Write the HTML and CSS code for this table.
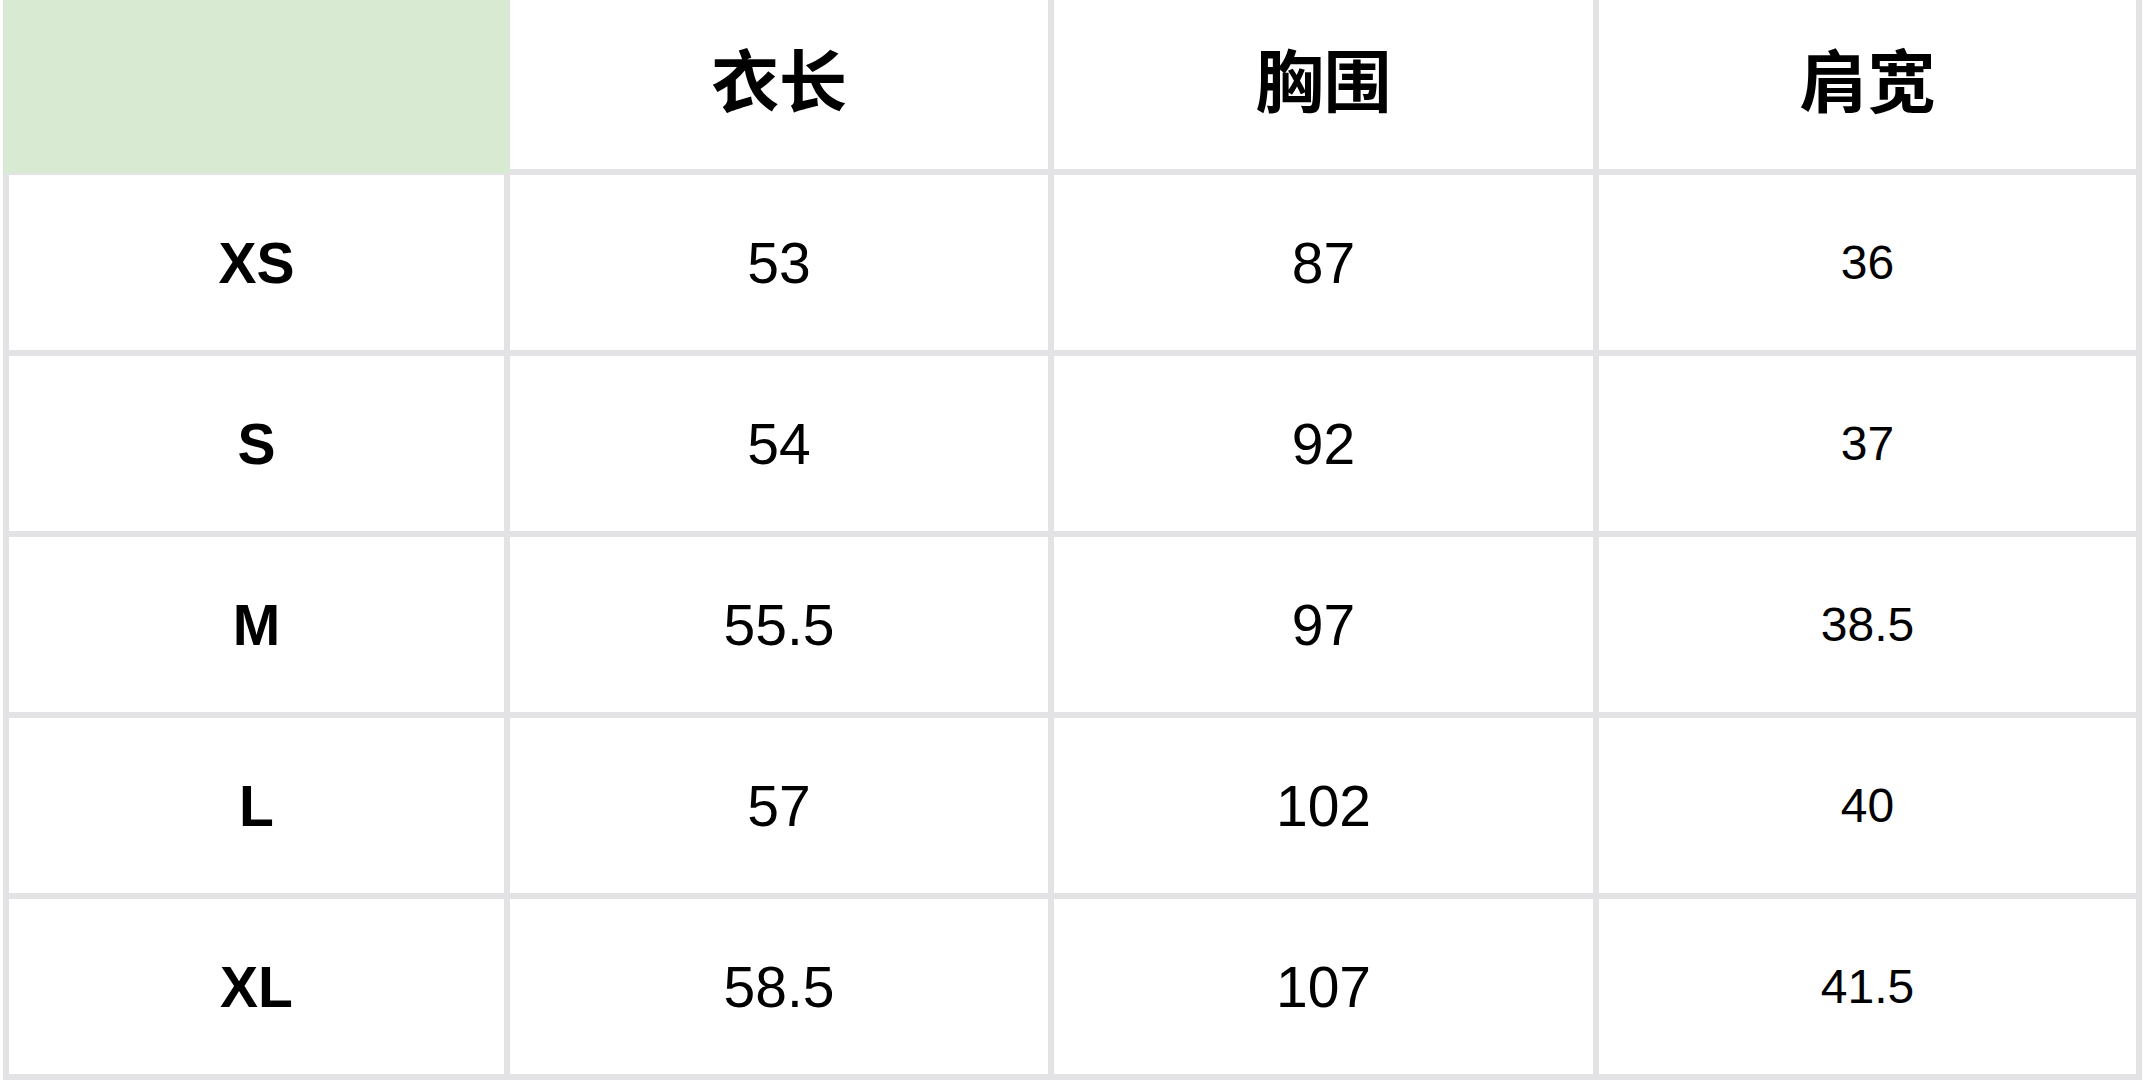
FILE: index.html
```html
<!DOCTYPE html>
<html lang="zh-CN">
<head>
<meta charset="utf-8">
<title>尺码表</title>
<link rel="stylesheet" href="styles.css">
</head>
<body>
<div class="sheet">
  <div class="cell head corner"></div>
  <div class="cell head">衣长</div>
  <div class="cell head">胸围</div>
  <div class="cell head">肩宽</div>

  <div class="cell size">XS</div>
  <div class="cell num">53</div>
  <div class="cell num">87</div>
  <div class="cell num small">36</div>

  <div class="cell size">S</div>
  <div class="cell num">54</div>
  <div class="cell num">92</div>
  <div class="cell num small">37</div>

  <div class="cell size">M</div>
  <div class="cell num">55.5</div>
  <div class="cell num">97</div>
  <div class="cell num small">38.5</div>

  <div class="cell size">L</div>
  <div class="cell num">57</div>
  <div class="cell num">102</div>
  <div class="cell num small">40</div>

  <div class="cell size">XL</div>
  <div class="cell num">58.5</div>
  <div class="cell num">107</div>
  <div class="cell num small">41.5</div>
</div>
</body>
</html>
```

FILE: styles.css
```css
html, body {
  margin: 0;
  padding: 0;
  background: #ffffff;
}

body {
  width: 2148px;
  height: 1080px;
  overflow: hidden;
  font-family: "Liberation Sans", Arial, sans-serif;
  color: #000000;
}

.sheet {
  display: grid;
  grid-template-columns: 495px 538px 539px 537px;
  grid-template-rows: 169px 175px 175px 175px 175px 175px;
  gap: 6px;
  margin-left: 3px;
  width: 2139px;
  box-sizing: border-box;
  padding: 0 6px 6px 6px;
  background: #e3e3e5;
}

.cell {
  background: #ffffff;
  display: flex;
  align-items: center;
  justify-content: center;
}

.head {
  font-family: "Noto Sans CJK SC", "Liberation Sans", sans-serif;
  font-weight: 700;
  font-size: 68px;
  padding-bottom: 14px;
  box-sizing: border-box;
}

.corner {
  background: #d9ead3;
  margin: 0 -6px -4px -6px;
}

.size {
  font-weight: 700;
  font-size: 57px;
}

.num {
  font-size: 57px;
}

.num.small {
  font-size: 48px;
}
```
